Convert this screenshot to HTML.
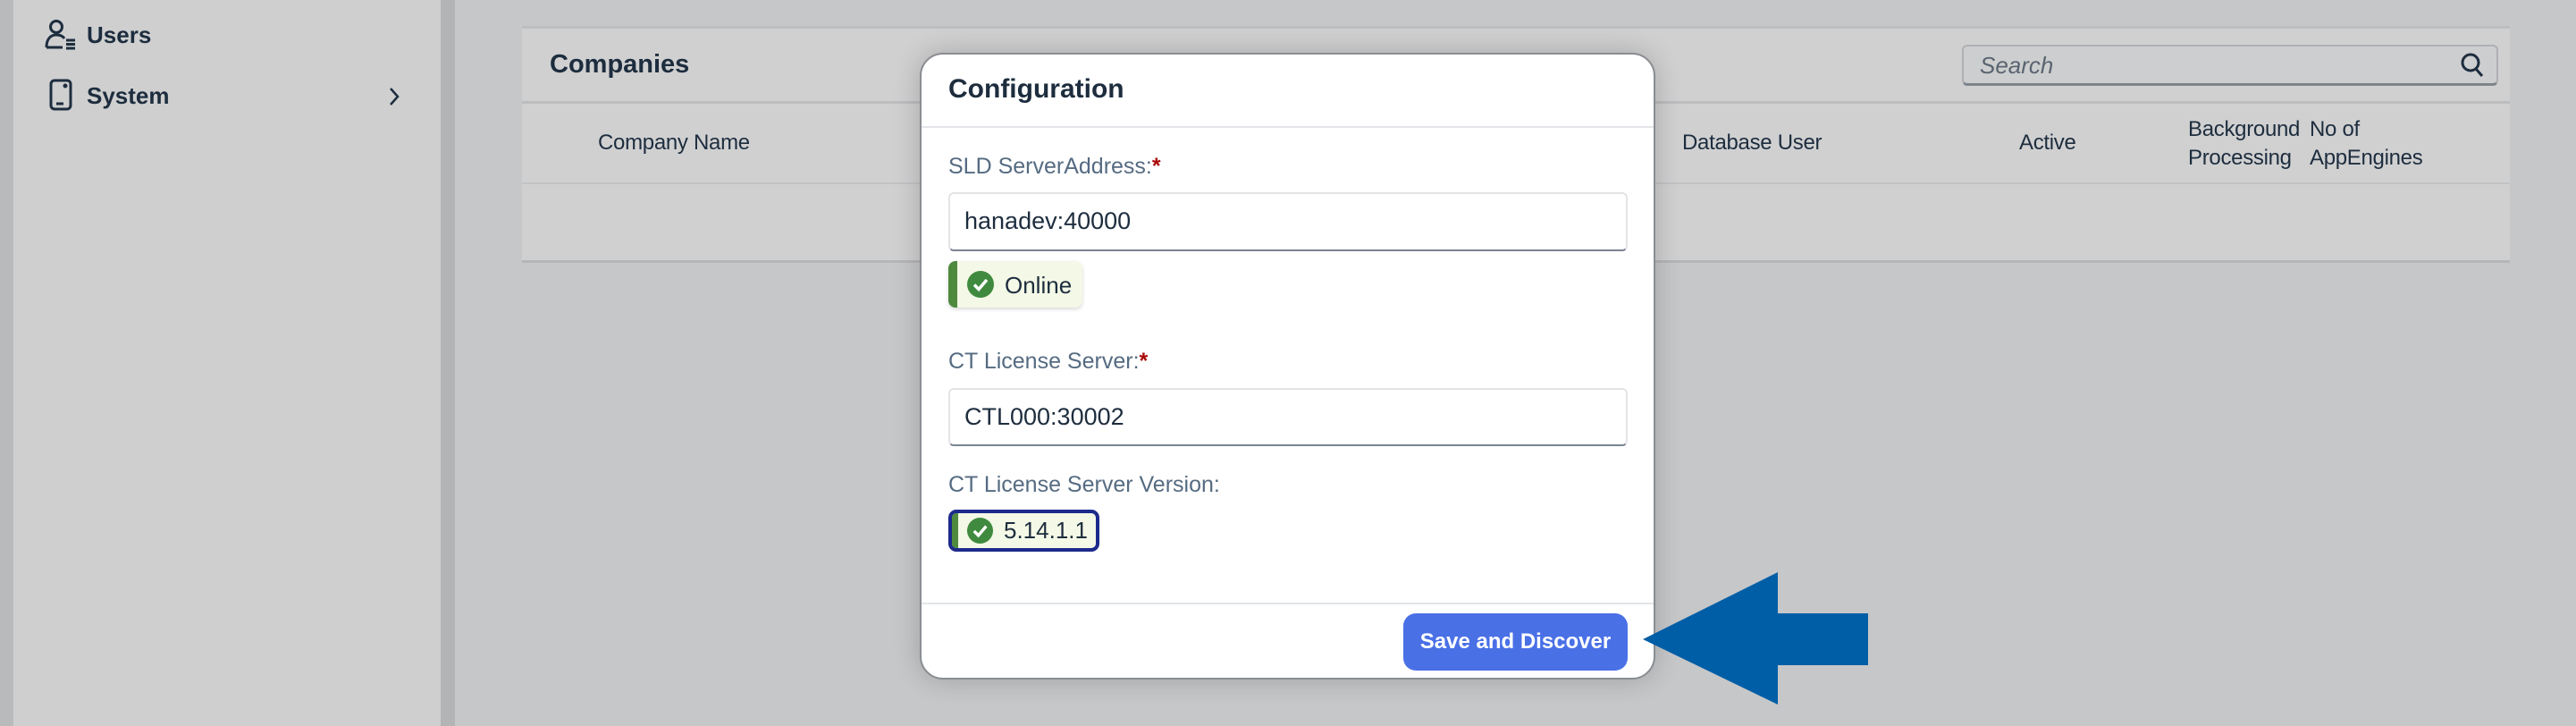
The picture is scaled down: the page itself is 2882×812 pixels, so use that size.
<!DOCTYPE html>
<html><head><meta charset="utf-8"><style>
*{margin:0;padding:0;box-sizing:border-box}
body{width:2882px;height:812px;overflow:hidden;background:#c6c7c9;font-family:"Liberation Sans",sans-serif;position:relative;color:#1d2d3e}
.a{position:absolute;white-space:nowrap}
.lbl{font-size:25px;color:#556b82}
.star{color:#aa0808;font-weight:bold}
.inp{background:#fff;border:2px solid #e2e4e6;border-bottom:2px solid #7a8391;border-radius:6px}
.t{font-size:27px;color:#1d2d3e}
.h{font-size:24px;letter-spacing:-0.3px}
</style></head><body>
<div class="a" style="left:0;top:0;width:15px;height:812px;background:#b9babc"></div>
<div class="a" style="left:15px;top:0;width:478px;height:812px;background:#cfcfd0"></div>
<div class="a" style="left:493px;top:0;width:16px;height:812px;background:#b3b4b6"></div>

<svg class="a" style="left:50px;top:22px" width="36" height="34" viewBox="0 0 36 34" fill="none" stroke="#1d2d3e" stroke-width="3">
<circle cx="13" cy="8" r="6.5"/><path d="M2 31 C2 20 8 17 13 17 C17 17 20 18 22 21 M2 31 H20"/>
<path d="M24 23 H34 M24 27.5 H34 M24 32 H34"/></svg>
<div class="a" style="left:97px;top:24px;font-size:26px;font-weight:bold">Users</div>
<svg class="a" style="left:55px;top:88px" width="26" height="36" viewBox="0 0 26 36" fill="none" stroke="#1d2d3e" stroke-width="3">
<rect x="2" y="2" width="22" height="32" rx="4"/><path d="M8 28 H16"/><circle cx="18" cy="8" r="1" fill="#1d2d3e"/></svg>
<div class="a" style="left:97px;top:92px;font-size:26px;font-weight:bold">System</div>
<svg class="a" style="left:434px;top:97px" width="14" height="22" viewBox="0 0 14 22" fill="none" stroke="#1d2d3e" stroke-width="2.5"><path d="M3 2 L11 11 L3 20"/></svg>

<div class="a" style="left:584px;top:29px;width:2224px;height:265px;background:#d0d0d1;border-top:3px solid #bdbec0;border-bottom:3px solid #b5b6b8"></div>
<div class="a" style="left:584px;top:113px;width:2224px;height:3px;background:#bcbdbf"></div>
<div class="a" style="left:584px;top:204px;width:2224px;height:2px;background:#c2c3c5"></div>
<div class="a" style="left:615px;top:56px;font-size:29px;font-weight:bold">Companies</div>
<div class="a" style="left:2195px;top:50px;width:600px;height:46px;background:#cdcecf;border:2px solid #aeb0b3;border-bottom:3px solid #7d848c;border-radius:6px"></div>
<div class="a" style="left:2215px;top:58px;font-size:26px;font-style:italic;color:#5a6470">Search</div>
<svg class="a" style="left:2752px;top:58px" width="28" height="30" viewBox="0 0 28 30" fill="none" stroke="#1d2d3e" stroke-width="3"><circle cx="12" cy="12" r="9"/><path d="M18 19 L25 27"/></svg>
<div class="a h" style="left:669px;top:146px">Company Name</div>
<div class="a h" style="left:1882px;top:146px">Database User</div>
<div class="a h" style="left:2259px;top:146px">Active</div>
<div class="a h" style="left:2448px;top:129px;line-height:32px">Background<br>Processing</div>
<div class="a h" style="left:2584px;top:129px;line-height:32px">No of<br>AppEngines</div>

<div class="a" style="left:1029px;top:59px;width:823px;height:701px;background:#fff;border:2px solid #8a8d92;border-radius:26px;box-shadow:0 0 30px rgba(0,0,0,.2)"></div>
<div class="a" style="left:1031px;top:141px;width:819px;height:2px;background:#e3e5e8"></div>
<div class="a" style="left:1031px;top:674px;width:819px;height:2px;background:#e3e5e8"></div>
<div class="a" style="left:1061px;top:83px;font-size:30px;font-weight:bold">Configuration</div>

<div class="a lbl" style="left:1061px;top:172px">SLD ServerAddress:<span class="star">*</span></div>
<div class="a inp" style="left:1061px;top:215px;width:760px;height:66px"></div>
<div class="a t" style="left:1079px;top:232px">hanadev:40000</div>
<div class="a" style="left:1061px;top:292px;width:150px;height:52px;background:#f4f8e6;border-left:10px solid #4e8a3e;border-radius:8px;box-shadow:0 2px 4px rgba(0,0,0,.15)"></div>
<svg class="a" style="left:1081px;top:302px" width="32" height="32" viewBox="0 0 32 32"><circle cx="16" cy="16" r="15" fill="#3f8a3f"/><path d="M9 16.5 L14 21.5 L23 11" fill="none" stroke="#fff" stroke-width="3.5"/></svg>
<div class="a t" style="left:1124px;top:304px;font-size:26px">Online</div>

<div class="a lbl" style="left:1061px;top:390px">CT License Server:<span class="star">*</span></div>
<div class="a inp" style="left:1061px;top:434px;width:760px;height:65px"></div>
<div class="a t" style="left:1079px;top:451px">CTL000:30002</div>

<div class="a lbl" style="left:1061px;top:528px">CT License Server Version:</div>
<div class="a" style="left:1061px;top:570px;width:169px;height:47px;background:#f4f8e6;border:4px solid #1c2a8c;border-radius:9px;overflow:hidden"><div style="width:7px;height:100%;background:#4e8a3e"></div></div>
<svg class="a" style="left:1081px;top:578px" width="31" height="31" viewBox="0 0 32 32"><circle cx="16" cy="16" r="15" fill="#3f8a3f"/><path d="M9 16.5 L14 21.5 L23 11" fill="none" stroke="#fff" stroke-width="3.5"/></svg>
<div class="a t" style="left:1123px;top:578px;font-size:26px">5.14.1.1</div>

<div class="a" style="left:1570px;top:686px;width:251px;height:64px;background:#4a70e6;border-radius:14px;color:#fff;font-size:24px;font-weight:bold;text-align:center;line-height:64px">Save and Discover</div>

<svg class="a" style="left:1836px;top:638px" width="256" height="152" viewBox="0 0 256 152"><path d="M2 77 L153 2 L153 48 L254 48 L254 106 L153 106 L153 150 Z" fill="#005ea6"/></svg>
</body></html>
